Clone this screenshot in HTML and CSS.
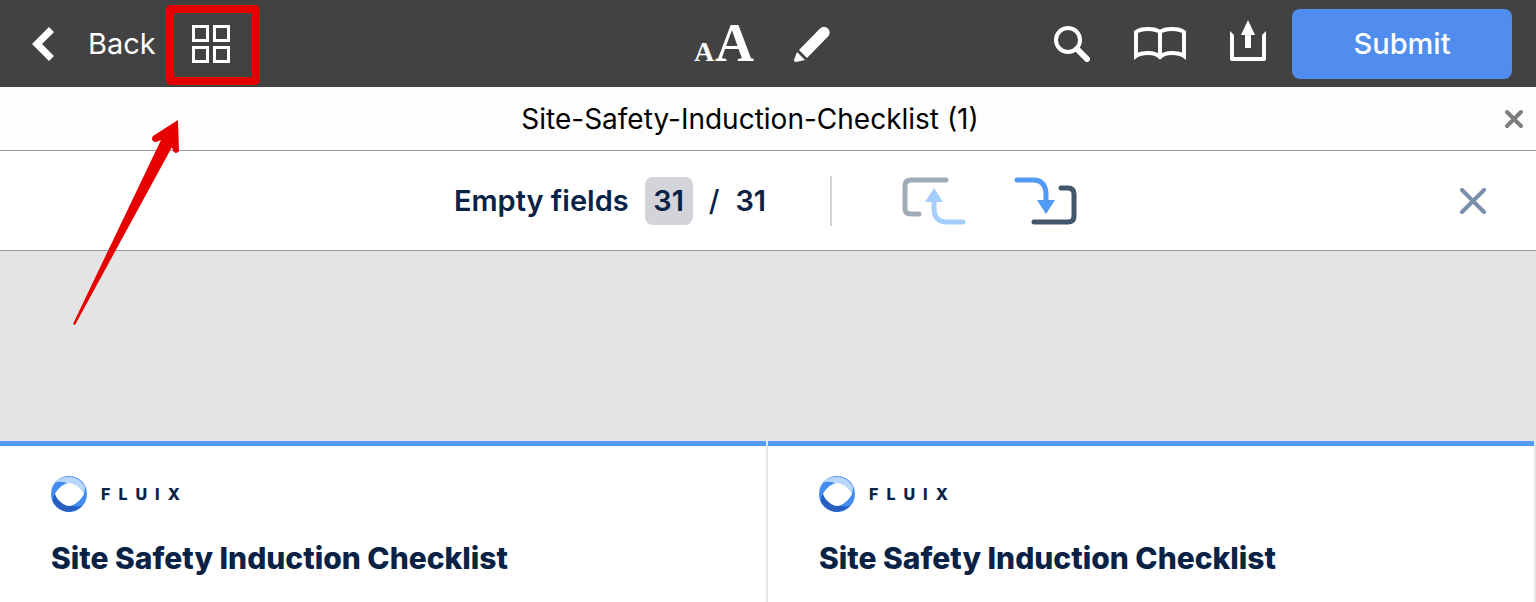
FILE: index.html
```
<!DOCTYPE html>
<html lang="en">
<head>
  <meta charset="UTF-8" />
  <meta name="viewport" content="width=device-width, initial-scale=1.0" />
  <title>Site-Safety-Induction-Checklist (1)</title>
  <link rel="stylesheet" href="styles.css">
</head>
<body>

  <header class="toolbar">
    <div class="toolbar-left">
      <button class="back-button" type="button">
        <svg width="22" height="34" viewBox="0 0 22 34" aria-hidden="true">
          <path d="M17 0l5 5-12 12 12 12-5 5L0 17z" fill="#fff" />
        </svg>
        <span>Back</span>
      </button>
      <button class="icon-button grid-button" type="button" aria-label="Thumbnails">
        <svg width="38" height="38" viewBox="0 0 38 38" fill="none" stroke="#fff" stroke-width="3" aria-hidden="true">
          <rect x="1.5" y="1.5" width="14" height="14" />
          <rect x="22.5" y="1.5" width="14" height="14" />
          <rect x="1.5" y="22.5" width="14" height="14" />
          <rect x="22.5" y="22.5" width="14" height="14" />
        </svg>
      </button>
    </div>

    <div class="toolbar-center">
      <button class="icon-button text-size" type="button" aria-label="Text size">
        <span class="small-a">A</span><span class="big-a">A</span>
      </button>
      <button class="icon-button" type="button" aria-label="Annotate">
        <svg width="36" height="36" viewBox="0 0 36 36" fill="#fff" aria-hidden="true">
          <path d="M5 24L26 2.500a5.500 5.500 0 0 1 8 8L13 32z" />
          <path d="M3 26l8 8-9 2q-2 0-2-2z" />
        </svg>
      </button>
    </div>

    <div class="toolbar-right">
      <div class="tools">
        <button class="icon-button" type="button" aria-label="Search">
          <svg width="36" height="36" viewBox="0 0 36 36" fill="none" stroke="#fff" aria-hidden="true">
            <circle cx="14" cy="14" r="12" stroke-width="4" />
            <path d="M23 23l10 10" stroke-width="6" stroke-linecap="round" />
          </svg>
        </button>
        <button class="icon-button" type="button" aria-label="Bookmarks">
          <svg width="52" height="34" viewBox="0 0 52 34" fill="none" stroke="#fff" stroke-width="4" aria-hidden="true">
            <path d="M26 29V5Q22 2 14 2T2 5v24q4-3 12-3t12 4q4-4 12-4t12 3V5q-4-3-12-3T26 5" />
          </svg>
        </button>
        <button class="icon-button share-button" type="button" aria-label="Share">
          <svg width="36" height="41" viewBox="0 0 36 41" fill="#fff" aria-hidden="true">
            <path d="M0 11l4 4v22h28V15l4-4v28a2 2 0 0 1-2 2H2a2 2 0 0 1-2-2z" />
            <path d="M18 0l7 15h-4v13h-6V15h-4z" />
          </svg>
        </button>
      </div>
      <button class="submit-button" type="button">Submit</button>
    </div>
  </header>

  <div class="title-bar">
    <h1>Site-Safety-Induction-Checklist (1)</h1>
    <button class="icon-button close-document" type="button" aria-label="Close document">
      <svg width="20" height="20" viewBox="0 0 20 20" stroke="#7d7d7d" stroke-width="4" stroke-linecap="round" aria-hidden="true">
        <path d="M3 3l14 14M17 3L3 17" />
      </svg>
    </button>
  </div>

  <div class="fields-bar">
    <div class="fields-content">
      <div class="fields-count">
        <span>Empty fields</span>
        <span class="count-badge">31</span>
        <span class="slash">/</span>
        <span>31</span>
      </div>
      <div class="fields-nav">
        <button class="icon-button" type="button" aria-label="Previous field">
          <svg width="64" height="50" viewBox="0 0 64 50" fill="none" stroke-width="5" stroke-linecap="round" aria-hidden="true">
            <path d="M44 4H9q-6 0-6 6v23q0 5 6 5h8" stroke="#9fabb7" />
            <path d="M32 20v12q0 14 13 14h16" stroke="#a4cefb" />
            <path d="M32 12l9 14H23z" fill="#a4cefb" />
          </svg>
        </button>
        <button class="icon-button" type="button" aria-label="Next field">
          <svg width="64" height="50" viewBox="0 0 64 50" fill="none" stroke-width="5" stroke-linecap="round" aria-hidden="true">
            <path d="M47 12h7q6 0 6 6v22q0 6-6 6H20" stroke="#43566e" />
            <path d="M3 4h16q13 0 13 15v9" stroke="#519af5" />
            <path d="M32 38l9-14H23z" fill="#519af5" />
          </svg>
        </button>
      </div>
    </div>
    <button class="icon-button close-fields" type="button" aria-label="Close empty fields">
      <svg width="26" height="26" viewBox="0 0 26 26" stroke="#7990aa" stroke-width="4" stroke-linecap="round" aria-hidden="true">
        <path d="M2 2l22 22M24 2L2 24" />
      </svg>
    </button>
  </div>

  <main class="viewer">
    <section class="page">
      <div class="brand">
        <svg width="36" height="36" viewBox="0 0 36 36" aria-hidden="true">
          <circle cx="18" cy="18" r="18" fill="#448bf3" />
          <path d="M4 7A18 18 0 0 1 34 11l-1 8L18 8Q10 4 4 7z" fill="#b9d6fb" />
          <path d="M4 18l14 11q7 2 13 1A18 18 0 0 1 2 26q-1-4 2-8z" fill="#265fbd" />
          <path d="M4 18c3-6 9-11 14-11s12 5 15 11c-3 6-10 12-15 12S6 24 4 18z" fill="#fff" />
        </svg>
        <div class="wordmark"><span>F</span><span>L</span><span>U</span><span>I</span><span>X</span></div>
      </div>
      <h2>Site Safety Induction Checklist</h2>
    </section>
    <section class="page">
      <div class="brand">
        <svg width="36" height="36" viewBox="0 0 36 36" aria-hidden="true">
          <circle cx="18" cy="18" r="18" fill="#448bf3" />
          <path d="M4 7A18 18 0 0 1 34 11l-1 8L18 8Q10 4 4 7z" fill="#b9d6fb" />
          <path d="M4 18l14 11q7 2 13 1A18 18 0 0 1 2 26q-1-4 2-8z" fill="#265fbd" />
          <path d="M4 18c3-6 9-11 14-11s12 5 15 11c-3 6-10 12-15 12S6 24 4 18z" fill="#fff" />
        </svg>
        <div class="wordmark"><span>F</span><span>L</span><span>U</span><span>I</span><span>X</span></div>
      </div>
      <h2>Site Safety Induction Checklist</h2>
    </section>
  </main>

  <!-- callout pointing at the thumbnails button -->
  <svg class="callout" width="264" height="330" viewBox="0 0 264 330" aria-hidden="true">
    <rect x="170" y="9" width="86" height="72" rx="1" fill="none" stroke="#e60000" stroke-width="8" stroke-linejoin="round" />
    <path d="M178 120l-25 16q-3 5 3 6l5-2L73 324l2 1 97-178 1 4q3 4 6 0z" fill="#e60000" />
  </svg>

</body>
</html>
```

FILE: styles.css
```
* { margin: 0; padding: 0; box-sizing: border-box; }

body {
  font-family: Inter, "Liberation Sans", sans-serif;
  font-size: 29px;
  line-height: 36px;
  color: #0a2245;
  background: #e4e4e4;
  min-height: 100vh;
  display: flex;
  flex-direction: column;
  overflow-x: hidden;
}

button {
  font: inherit;
  background: none;
  border: none;
  cursor: pointer;
}

svg {
  display: block;
  flex-shrink: 0;
}

.toolbar {
  display: grid;
  grid-template-columns: 1fr auto 1fr;
  align-items: center;
  padding: 9px 24px 8px 12px;
  background: #424242;
  color: #fff;
}

.toolbar-left,
.toolbar-center,
.toolbar-right,
.tools {
  display: flex;
  align-items: center;
}

.back-button {
  display: flex;
  align-items: center;
  gap: 34px;
  padding-left: 20px;
  color: #fff;
}

.icon-button {
  display: flex;
  align-items: center;
  justify-content: center;
}

.grid-button {
  padding: 0 36px;
}

.toolbar-center {
  gap: 40px;
}

.text-size {
  align-items: baseline;
  gap: 1px;
  padding-top: 6px;
  color: #fff;
  font-family: "Liberation Serif", serif;
  font-weight: bold;
}

.small-a { font-size: 28px; }
.big-a { font-size: 54px; }

.toolbar-right {
  justify-content: flex-end;
  gap: 26px;
}

.tools {
  gap: 44px;
}

.share-button {
  padding-bottom: 8px;
}

.submit-button {
  width: 220px;
  height: 70px;
  border-radius: 8px;
  background: #508dee;
  color: #fff;
  font-weight: 500;
}

.title-bar {
  display: flex;
  align-items: center;
  height: 64px;
  background: #fdfdfd;
  border-bottom: 1px solid #999;
  color: #000;
}

.title-bar h1 {
  flex: 1;
  font-size: 28px;
  font-weight: 400;
  text-align: center;
}

.close-document {
  padding: 0 12px 0 4px;
}

.fields-bar {
  display: grid;
  grid-template-columns: 1fr auto 1fr;
  align-items: center;
  height: 100px;
  padding-right: 4px;
  background: #fff;
  border-bottom: 1px solid #999;
}

.fields-content {
  grid-column: 2;
  display: flex;
  align-items: center;
}

.fields-count {
  display: flex;
  align-items: center;
  gap: 16px;
  height: 50px;
  padding-right: 64px;
  border-right: 2px solid #d3d4da;
  font-weight: 600;
}

.count-badge {
  width: 48px;
  line-height: 48px;
  text-align: center;
  background: #d3d4da;
  border-radius: 8px;
}

.slash {
  font-weight: 500;
}

.fields-nav {
  display: flex;
  gap: 48px;
  padding-left: 70px;
}

.close-fields {
  justify-self: end;
  padding-right: 46px;
}

.viewer {
  flex: 1;
  display: grid;
  grid-template-columns: 1fr 1fr;
  gap: 2px;
  padding: 190px 2px 0 0;
}

.page {
  padding: 30px 51px;
  background: #fff;
  border-top: 5px solid #519af5;
}

.brand {
  display: flex;
  align-items: center;
  gap: 14px;
}

.wordmark {
  display: flex;
  gap: 8px;
  font-size: 16px;
  font-weight: 800;
}

.page h2 {
  margin-top: 28px;
  font-size: 30px;
  font-weight: 800;
}

.callout {
  position: absolute;
  top: 0;
  left: 0;
  pointer-events: none;
}
```
